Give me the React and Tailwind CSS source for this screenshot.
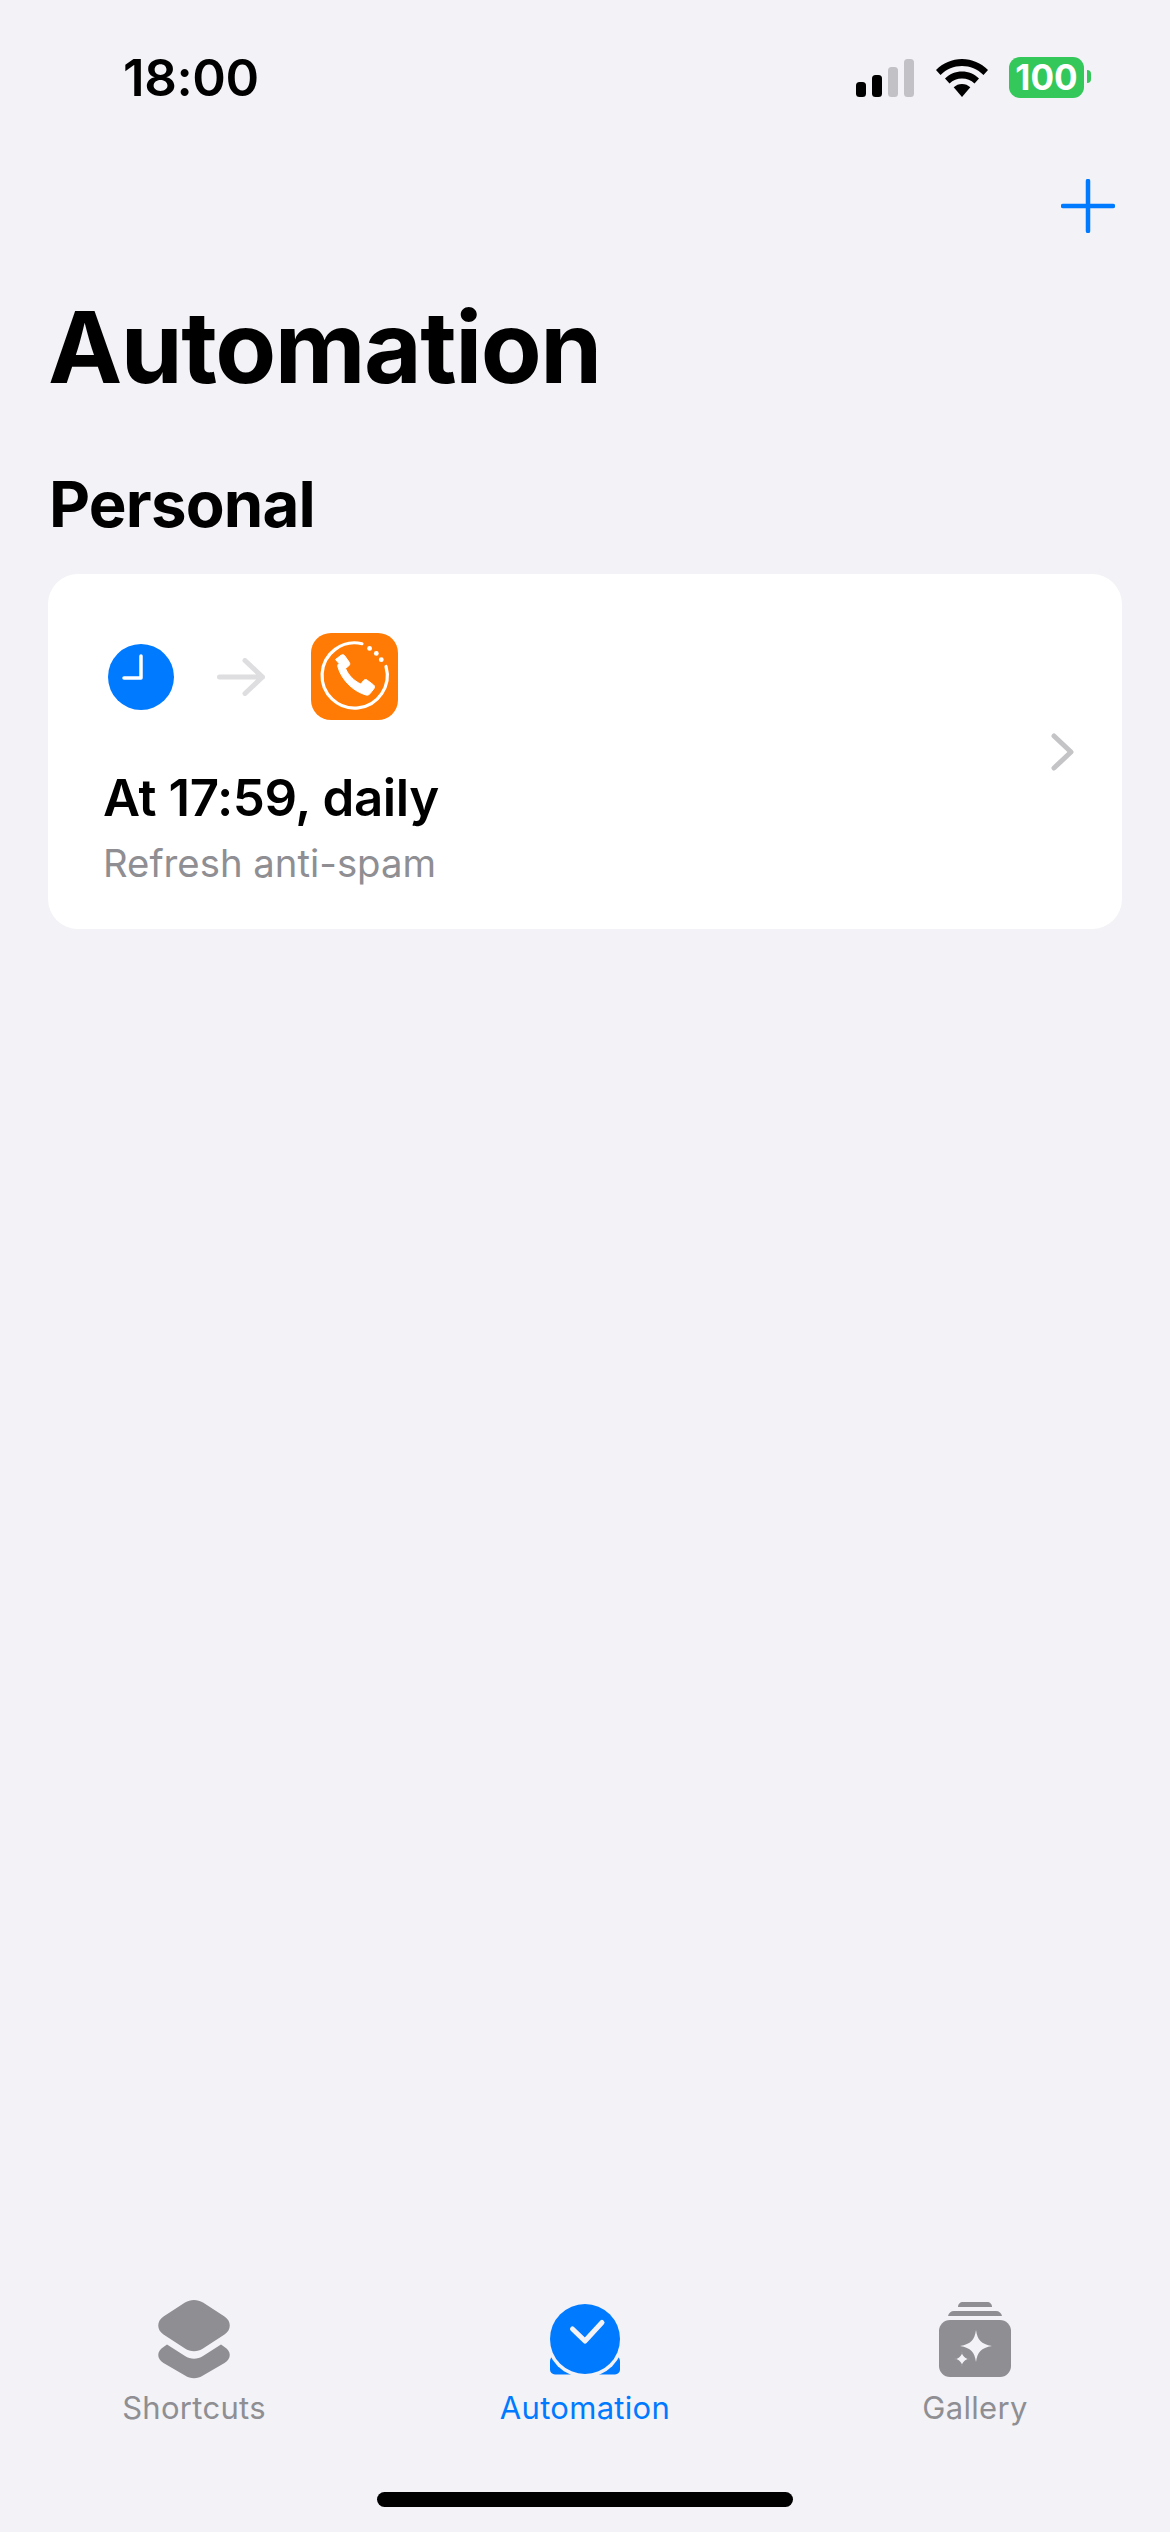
import React from 'react';

const SignalIcon = () => (
  <svg width="58" height="38" viewBox="0 0 58 38" className="block">
    <rect x="0" y="23" width="10" height="15" rx="3.5" fill="#000" />
    <rect x="16" y="16" width="10" height="22" rx="3.5" fill="#000" />
    <rect x="32" y="8" width="10" height="30" rx="3.5" fill="#c1c1c6" />
    <rect x="48" y="0" width="10" height="38" rx="3.5" fill="#c1c1c6" />
  </svg>
);

const WifiIcon = () => (
  <svg width="52" height="38" viewBox="0 0 52 38" className="block">
    <path d="M26 0C16 0 7 4 0 11l4.500 5C10.500 10 18 7 26 7s15.500 3 21.500 9L52 11C45 4 36 0 26 0Z" fill="#000" />
    <path d="M26 12.500c-6.500 0-12.500 2.500-17 7l4.500 5c3.500-3.200 7.800-5 12.500-5s9 1.800 12.500 5l4.500-5c-4.500-4.500-10.500-7-17-7Z" fill="#000" />
    <path d="M26 25c-3.200 0-6 1.200-8.300 3.300L26 38l8.300-9.700C32 26.200 29.200 25 26 25Z" fill="#000" />
  </svg>
);

const StatusBar = () => (
  <div className="flex h-[107px] items-start justify-between pl-[123px] pr-[79px] pt-[55px]">
    <span className="text-[51px] leading-[46px] font-semibold tracking-[-0.4px] text-black">18:00</span>
    <div className="flex items-start pt-[4px]">
      <SignalIcon />
      <div className="ml-[22px]"><WifiIcon /></div>
      <div className="relative -top-[2px] ml-[21px] flex h-[41px] w-[75px] items-center justify-center rounded-[11px] bg-[#34c759]">
        <span className="text-[35px] leading-none font-bold text-white">100</span>
      </div>
      <div className="mt-[11px] ml-[3px] h-[13px] w-[4px] rounded-r-full bg-[#34c759]" />
    </div>
  </div>
);

const PlusIcon = () => (
  <svg width="54" height="54" viewBox="0 0 54 54" className="block">
    <path d="M27 2v50M2 27h50" stroke="#007aff" strokeWidth="4.500" strokeLinecap="round" fill="none" />
  </svg>
);

const ClockBadge = () => (
  <svg width="66" height="66" viewBox="0 0 66 66" className="block">
    <circle cx="33" cy="33" r="33" fill="#007aff" />
    <path d="M33 12v22H16" stroke="#fff" strokeWidth="3.500" strokeLinecap="round" strokeLinejoin="round" fill="none" />
  </svg>
);

const ArrowIcon = () => (
  <svg width="48" height="38" viewBox="0 0 48 38" className="block">
    <path d="M2.500 19h43M28 2.500l17.500 16.500L28 35.500" stroke="#dedee0" strokeWidth="5" strokeLinecap="round" strokeLinejoin="round" fill="none" />
  </svg>
);

const PhoneAppIcon = () => (
  <svg width="87" height="87" viewBox="0 0 87 87" className="block">
    <rect width="87" height="87" rx="20" fill="#ff7b05" />
    <path d="M51 10.700A32.600 32.600 0 1 0 75 33.500" stroke="#fff" strokeWidth="3.200" strokeLinecap="round" fill="none" />
    <circle cx="58.600" cy="15.400" r="2.400" fill="#fff" />
    <circle cx="65.300" cy="20.400" r="2.400" fill="#fff" />
    <circle cx="70.300" cy="26.700" r="2.400" fill="#fff" />
    <path d="M25.500 27.500l5.500-4.200c1.300-.9 2.800-.7 3.700.5l4.600 6.500c.8 1.200.6 2.600-.5 3.500l-3.300 2.700c1.500 3.500 3.700 6.500 6.300 9.200 2.700 2.700 5.600 4.800 9 6.300l2.800-3.400c.9-1.100 2.300-1.300 3.500-.5l6.400 4.800c1.200.9 1.400 2.400.5 3.600l-4.100 5.300c-1 1.200-2.500 1.600-4 1.200-6.500-2-12.300-5.500-17.200-10.300-5-5-8.700-10.800-10.700-17.400-.5-1.600-.1-3 1-3.800Z" fill="#fff" stroke="#fff" strokeWidth="1" strokeLinejoin="round" transform="translate(-1 -1)" />
  </svg>
);

const ChevronIcon = () => (
  <svg width="26" height="38" viewBox="0 0 26 38" className="block">
    <path d="M4 3l17 16L4 35" stroke="#c4c4c7" strokeWidth="5" strokeLinecap="round" strokeLinejoin="round" fill="none" />
  </svg>
);

const ShortcutsTabIcon = () => (
  <svg width="72" height="80" viewBox="0 0 72 80" className="block">
    <path d="M27 3.500c5.500-3.500 12.500-3.500 18 0l21.500 14c7 4.500 7 13.500 0 18l-21.500 14c-5.500 3.500-12.500 3.500-18 0l-21.500-14c-7-4.500-7-13.500 0-18Z" fill="#8e8e93" />
    <path d="M9 45.500 27 57c5.500 3.500 12.500 3.500 18 0l18-11.500 3.500 2.500c7 4.500 7 11.500 0 16L45 76.500c-5.500 3.500-12.500 3.500-18 0L5.500 64c-7-4.500-7-11.500 0-16Z" fill="#8e8e93" />
  </svg>
);

const AutomationTabIcon = () => (
  <svg width="72" height="71" viewBox="0 0 72 71" className="mb-[4px] block">
    <rect x="1" y="52" width="70" height="18.500" rx="5" fill="#007aff" />
    <circle cx="36" cy="35" r="38.500" fill="#f2f2f7" />
    <circle cx="36" cy="35" r="35" fill="#007aff" />
    <path d="M23.500 25l12.500 12L53 18.500" stroke="#f2f2f7" strokeWidth="5" strokeLinecap="round" strokeLinejoin="round" fill="none" />
  </svg>
);

const GalleryTabIcon = () => (
  <svg width="72" height="78" viewBox="0 0 72 78" className="block">
    <path d="M19 6c0-3 2-5 5-5h24c3 0 5 2 5 5Z" fill="#8e8e93" />
    <path d="M9 15c.5-3 3-5 6-5h42c3 0 5.500 2 6 5Z" fill="#8e8e93" />
    <rect x="0" y="19" width="72" height="57" rx="11" fill="#8e8e93" />
    <path d="M37 29c1.500 10 5 14 16 16-11 2-14.500 6-16 16-1.500-10-5-14-16-16 11-2 14.500-6 16-16Z" fill="#f2f2f7" />
    <path d="M23 50c.8 5 2.500 7 8 8-5.500 1-7.200 3-8 8-.8-5-2.500-7-8-8 5.500-1 7.200-3 8-8Z" fill="#f2f2f7" stroke="#8e8e93" strokeWidth="1" />
  </svg>
);

const TabItem = ({ icon, label, active, className }) => (
  <div className={`flex w-[200px] flex-col items-center ${className}`}>
    <div className="flex h-[82px] items-end">{icon}</div>
    <span className={`mt-[11px] text-[31px] leading-[36px] tracking-[0.3px] ${active ? 'text-[#007aff]' : 'text-[#8e8e93]'}`}>{label}</span>
  </div>
);

export default function App() {
  return (
    <div className="flex h-[2532px] w-[1170px] flex-col overflow-hidden bg-[#f2f2f7] font-['Inter',sans-serif]">
      <StatusBar />

      <div className="flex justify-end pt-[72px] pr-[55px]">
        <PlusIcon />
      </div>

      <h1 className="mt-[52px] px-[48px] text-[99.500px] leading-[124px] font-bold tracking-[-1.5px] text-black">Automation</h1>
      <h2 className="mt-[55px] px-[49px] text-[63.500px] leading-[80px] font-bold tracking-[-0.8px] text-black">Personal</h2>

      <div className="mx-[48px] mt-[30px] flex h-[355px] rounded-[30px] bg-white pr-[46px] pl-[55px]">
        <div className="flex-1 pt-[59px]">
          <div className="flex items-center">
            <div className="ml-[5px]"><ClockBadge /></div>
            <div className="ml-[43px]"><ArrowIcon /></div>
            <div className="ml-[46px]"><PhoneAppIcon /></div>
          </div>
          <div className="mt-[48px] text-[51px] leading-[60px] font-semibold tracking-[-0.4px] text-black">At 17:59, daily</div>
          <div className="mt-[10px] text-[38.300px] leading-[50px] text-[#8e8e93]">Refresh anti-spam</div>
        </div>
        <div className="self-center"><ChevronIcon /></div>
      </div>

      <div className="flex-1" />

      <div className="relative flex h-[98px] items-end">
        <TabItem icon={<ShortcutsTabIcon />} label="Shortcuts" className="ml-[94px]" />
        <TabItem icon={<AutomationTabIcon />} label="Automation" active className="ml-[191px]" />
        <TabItem icon={<GalleryTabIcon />} label="Gallery" className="ml-[190px]" />
      </div>

      <div className="flex h-[106px] justify-center pt-[66px]">
        <div className="h-[15px] w-[416px] rounded-full bg-black" />
      </div>
    </div>
  );
}
